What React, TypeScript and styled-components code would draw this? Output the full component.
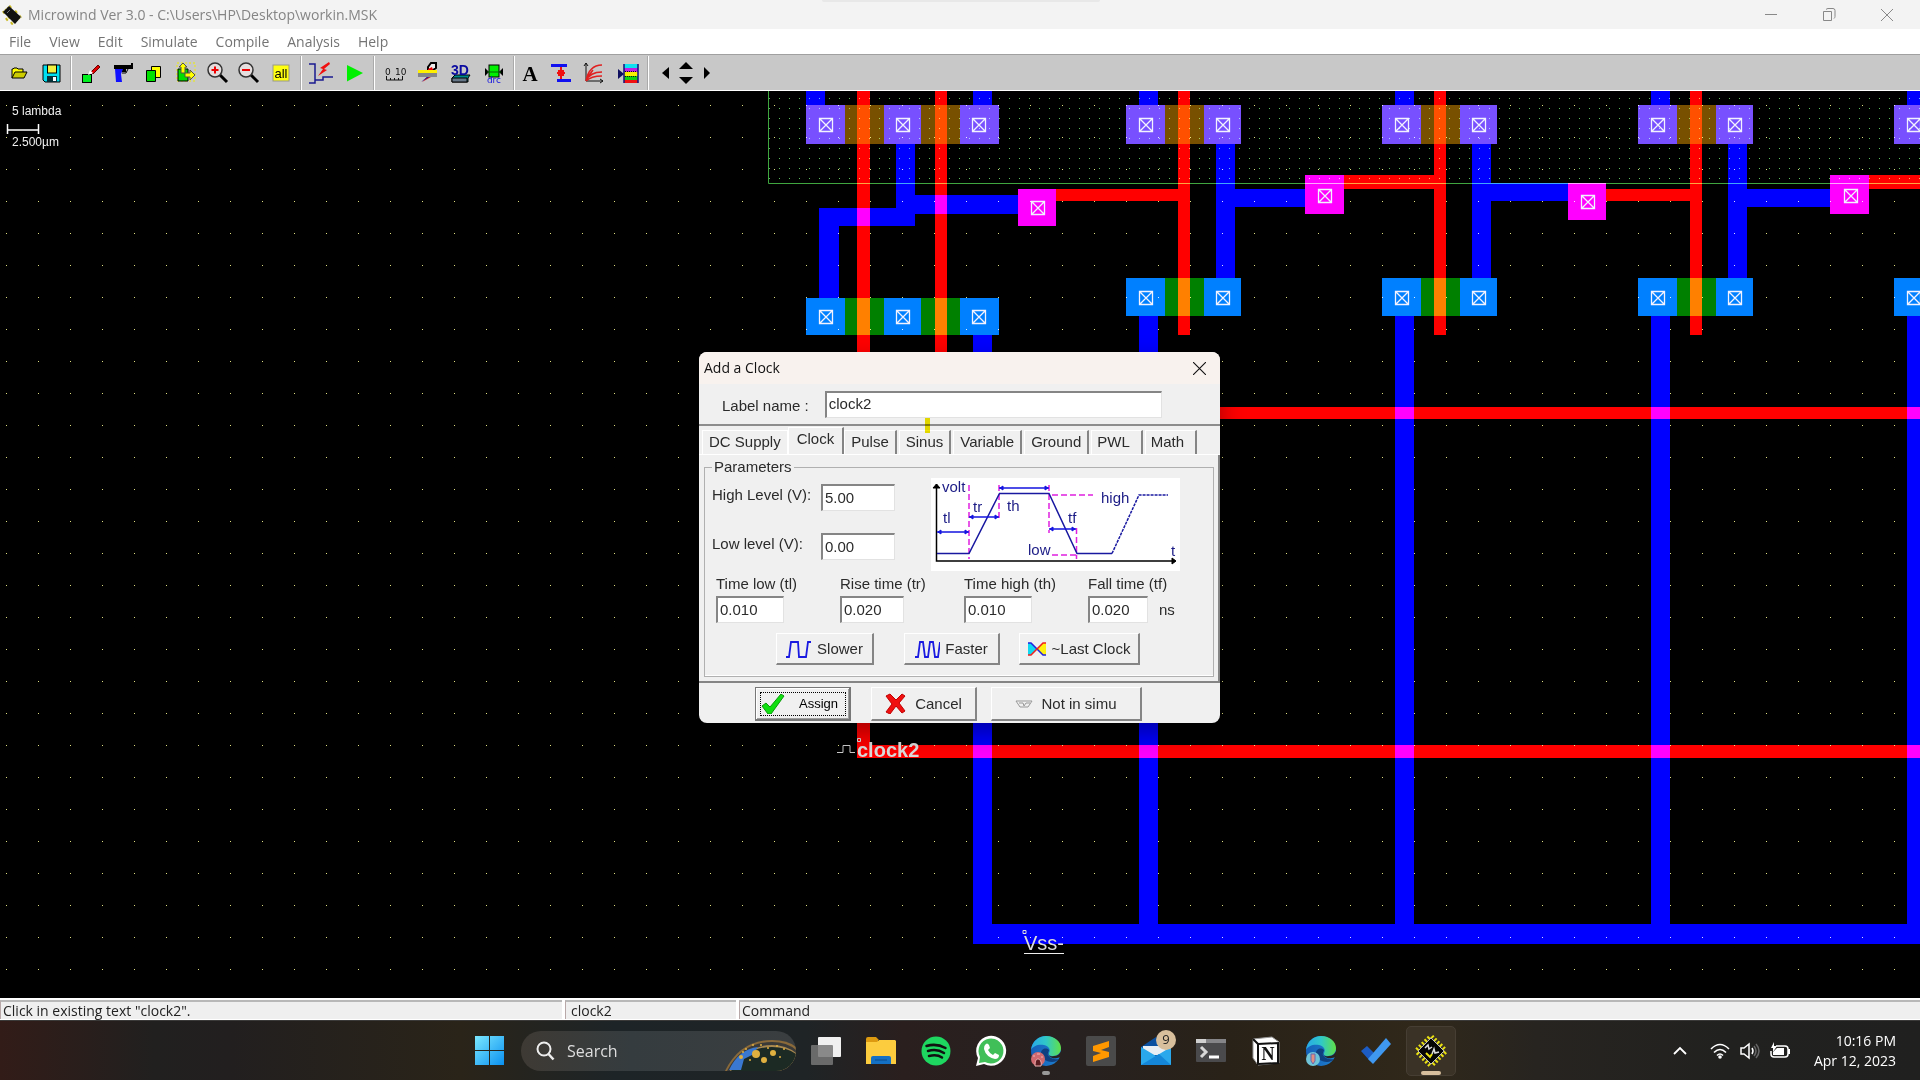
import React from "react";
import styled, { createGlobalStyle, css } from "styled-components";

const GlobalStyle = createGlobalStyle`
  * { box-sizing: border-box; }
  html, body { margin: 0; padding: 0; background: #000; }
  button, input { font: inherit; color: inherit; margin: 0; }
`;

const uiFont = `"Open Sans", "Noto Sans", sans-serif`;
const classicFont = `"Liberation Sans", Arial, sans-serif`;

const Screen = styled.div`
  display: flex;
  flex-direction: column;
  min-height: 100vh;
  overflow: hidden;
  font-family: ${uiFont};
  font-size: 14px;
`;

/* ---------- window chrome ---------- */

const TitleBar = styled.header`
  position: relative;
  display: flex;
  align-items: center;
  gap: 6px;
  height: 29px;
  padding-left: 2px;
  background: #f3f3f3;
  color: #858585;
`;

const SnapHandle = styled.div`
  position: absolute;
  top: 0;
  left: 50%;
  width: 278px;
  height: 2px;
  margin-left: -138px;
  border-radius: 0 0 4px 4px;
  background: #e8e8e8;
`;

const WindowTitle = styled.h1`
  flex: 1;
  margin: 0;
  font-size: 14px;
  font-weight: 400;
  line-height: 20px;
  white-space: nowrap;
`;

const WindowControls = styled.div`
  display: flex;
  gap: 12px;
  padding-right: 10px;
`;

const WindowButton = styled.button`
  display: grid;
  place-items: center;
  width: 46px;
  height: 28px;
  padding: 0;
  border: 0;
  background: none;
`;

const MenuBar = styled.nav`
  display: flex;
  align-items: center;
  gap: 18px;
  height: 25px;
  padding-left: 9px;
  background: #fff;
`;

const MenuItem = styled.button`
  padding: 0;
  border: 0;
  background: none;
  color: #747474;
  font-size: 14px;
  line-height: 20px;
`;

const ToolBar = styled.div`
  display: flex;
  align-items: center;
  gap: 7px;
  height: 37px;
  padding-left: 7px;
  background: #c8c8c8;
  border-top: 1px solid #a0a0a0;
  border-bottom: 1px solid #fff;
`;

const ToolGroup = styled.div<{ $width: number }>`
  display: flex;
  align-items: center;
  justify-content: space-between;
  width: ${(p) => p.$width}px;
`;

const ToolSeparator = styled.div`
  width: 2px;
  height: 34px;
  background: #fff;
  border-left: 1px solid #aaa;
`;

const ToolButton = styled.button<{ $width?: number; $height?: number }>`
  display: block;
  width: ${(p) => p.$width ?? 24}px;
  height: ${(p) => p.$height ?? 24}px;
  padding: 0;
  border: 0;
  background: none;
  svg { display: block; overflow: visible; }
`;

const ArrowStack = styled.div`
  display: flex;
  flex-direction: column;
  gap: 8px;
`;

/* ---------- layout canvas ---------- */

const Canvas = styled.main`
  position: relative;
  flex: 1;
  min-height: 700px;
  background: #000;
  overflow: hidden;
`;

const Drawing = styled.svg`
  position: absolute;
  inset: 0;
  width: 100%;
  height: 100%;
  isolation: isolate;
  font-family: ${classicFont};
`;

const Layer = styled.g`
  mix-blend-mode: screen;
`;

/* ---------- dialog ---------- */

const Dialog = styled.section`
  position: absolute;
  left: 699px;
  top: 261px;
  width: 521px;
  border-radius: 8px;
  overflow: hidden;
  background: #f0f0f0;
  color: #2b2b2b;
  font-family: ${classicFont};
  font-size: 15px;
  line-height: 18px;
  box-shadow: 0 10px 24px rgba(0, 0, 0, 0.35);
`;

const DialogTitle = styled.header`
  display: flex;
  align-items: center;
  justify-content: space-between;
  height: 32px;
  padding: 0 12px 0 5px;
  background: #f8f2ee;
  color: #111;
  font-family: ${uiFont};
  h2 { margin: 0; font-size: 14px; font-weight: 400; }
`;

const CloseButton = styled.button`
  padding: 2px;
  border: 0;
  background: none;
  svg { display: block; }
`;

const NameRow = styled.div`
  display: flex;
  align-items: center;
  gap: 16px;
  height: 42px;
  padding-left: 23px;
  border-bottom: 2px solid #8d8d8d;
  label { padding-top: 3px; }
`;

const sunken = css`
  border: 1px solid #e2e2e2;
  border-top: 2px solid #858585;
  border-left: 2px solid #858585;
  background: #fff;
`;

const TextBox = styled.input<{ $width: number }>`
  ${sunken}
  width: ${(p) => p.$width}px;
  height: 27px;
  padding: 0 0 2px 2px;
  line-height: 18px;
  outline: none;
`;

const TabStrip = styled.div`
  display: flex;
  align-items: flex-end;
  height: 29px;
  padding-left: 3px;
  border-bottom: 1px solid #fff;
`;

const Tab = styled.button<{ $active?: boolean; $first?: boolean; $wide?: boolean }>`
  height: ${(p) => (p.$active ? 27 : 24)}px;
  margin-right: ${(p) => (p.$active || p.$first ? 0 : 2)}px;
  padding: 0 6px 1px 6px;
  ${(p) => p.$active && css`padding: 0 8px 4px;`}
  ${(p) => p.$wide && css`padding-left: 5px; padding-right: 11px;`}
  border: 0;
  border-top: 1px solid #fff;
  border-left: 1px solid #fff;
  border-right: ${(p) => (p.$first ? "1px solid #fff" : "2px solid #858585")};
  background: #f0f0f0;
`;

const TabPanel = styled.div`
  padding: 3px 4px 4px 5px;
  border-right: 2px solid #858585;
  border-bottom: 2px solid #858585;
`;

const Parameters = styled.fieldset`
  margin: 0;
  padding: 0 0 11px 0;
  border: 1px solid #b0b0b0;
  box-shadow: inset 0 -1px 0 #fff;
  legend { margin-left: 7px; padding: 0 2px; }
`;

const LevelArea = styled.div`
  display: flex;
  justify-content: space-between;
  padding: 0 33px 0 7px;
`;

const Levels = styled.div`
  display: grid;
  grid-template-columns: 109px 74px;
  align-content: start;
  row-gap: 22px;
  padding-top: 8px;
  label { padding-top: 2px; }
`;

const Diagram = styled.svg`
  display: block;
  margin-top: 2px;
  background: #fff;
  font-family: ${classicFont};
  font-size: 15px;
`;

const Times = styled.div`
  display: grid;
  grid-template-columns: repeat(4, 124px);
  padding: 4px 0 0 11px;
`;

const TimeField = styled.div`
  display: flex;
  flex-direction: column;
  gap: 3px;
  white-space: nowrap;
`;

const WithUnit = styled.div`
  display: flex;
  align-items: center;
  gap: 11px;
`;

const ButtonRow = styled.div<{ $indent: number; $top: number; $bottom: number }>`
  display: flex;
  padding: ${(p) => p.$top}px 0 ${(p) => p.$bottom}px ${(p) => p.$indent}px;
`;

const PushButton = styled.button<{ $width: number; $before?: number; $tall?: boolean; $default?: boolean; $gap?: number }>`
  display: flex;
  align-items: center;
  justify-content: center;
  gap: ${(p) => p.$gap ?? 6}px;
  width: ${(p) => p.$width}px;
  height: ${(p) => (p.$tall ? 34 : 32)}px;
  margin-left: ${(p) => p.$before ?? 0}px;
  padding: 0;
  border: 1px solid #fff;
  border-right: 2px solid #858585;
  border-bottom: 2px solid #858585;
  background: #f0f0f0;
  white-space: nowrap;
  ${(p) =>
    p.$default &&
    css`
      padding-right: 6px;
      border: 2px solid #777;
      border-top-width: 1px;
      border-left-width: 1px;
      box-shadow: inset 1px 1px 0 #fff, inset -1px -1px 0 #a0a0a0;
      outline: 1px dotted #000;
      outline-offset: -6px;
      color: #000;
      font-size: 13px;
    `}
`;

/* ---------- status bar ---------- */

const StatusBar = styled.footer`
  display: flex;
  gap: 3px;
  height: 22px;
  padding: 2px 0 1px;
  background: #fff;
  color: #222;
`;

const StatusPane = styled.div<{ $width?: number; $indent?: number }>`
  ${(p) => (p.$width ? `width: ${p.$width}px;` : "flex: 1;")}
  padding-left: ${(p) => p.$indent ?? 2}px;
  background: #efefef;
  border-top: 2px solid #b8b8b8;
  border-left: 1px solid #b8a8a8;
  line-height: 18px;
  white-space: nowrap;
`;

/* ---------- taskbar ---------- */

const TaskBar = styled.nav`
  display: grid;
  grid-template-columns: 1fr auto 1fr;
  align-items: center;
  height: 60px;
  border-top: 1px solid #3b3a39;
  color: #fff;
  background: linear-gradient(90deg, #321c18 0, #21201f 8%, #221f1f 12%, #2a2419 24%, #1d2427 32%, #1f2426 42%, #2a1f1e 47%, #272120 56%, #292218 64%, #30281a 74%, #272420 80%, #21211f 90%, #20201f 100%);
`;

const TaskItems = styled.div`
  grid-column: 2;
  display: flex;
  align-items: center;
  gap: 5px;
`;

const TaskButton = styled.button<{ $active?: boolean }>`
  position: relative;
  display: grid;
  place-items: center;
  width: 50px;
  height: 50px;
  padding: 0;
  border: 1px solid ${(p) => (p.$active ? "#463e33" : "transparent")};
  border-radius: 5px;
  background: ${(p) => (p.$active ? "#3a3226" : "none")};
  svg { display: block; overflow: visible; }
`;

const Running = styled.span<{ $width: number; $color: string }>`
  position: absolute;
  bottom: 0;
  left: 50%;
  width: ${(p) => p.$width}px;
  height: 4px;
  margin-left: ${(p) => -p.$width / 2}px;
  border-radius: 2px;
  background: ${(p) => p.$color};
`;

const Badge = styled.span`
  position: absolute;
  top: 3px;
  right: 4px;
  width: 20px;
  height: 20px;
  border-radius: 10px;
  background: #d8bf9c;
  color: #222;
  font-size: 13px;
  line-height: 19px;
  text-align: center;
`;

const Search = styled.label`
  display: flex;
  align-items: center;
  gap: 12px;
  width: 275px;
  height: 40px;
  margin-left: 2px;
  padding-left: 14px;
  border-radius: 20px;
  overflow: hidden;
  background: linear-gradient(90deg, #3e3a34, #353c3f 40%, #3a3e40);
  input {
    flex: 1;
    min-width: 0;
    padding: 0;
    border: 0;
    outline: 0;
    background: none;
    color: #dedede;
    font-size: 16px;
  }
  input::placeholder { color: #dedede; opacity: 1; }
  svg { flex: none; display: block; }
`;

const Tray = styled.div`
  display: flex;
  align-items: center;
  justify-content: flex-end;
  padding-right: 24px;
`;

const TrayIcons = styled.div`
  display: flex;
  margin-left: 10px;
`;

const TrayButton = styled.button`
  display: grid;
  place-items: center;
  width: 30px;
  height: 40px;
  padding: 0;
  border: 0;
  background: none;
  svg { display: block; }
`;

const Clock = styled.time`
  width: 101px;
  text-align: right;
  line-height: 20px;
  white-space: nowrap;
`;

/* ---------- toolbar icons, each on a 24 x 24 grid ---------- */

const glyphs: Record<string, React.ReactNode> = {
  open: (
    <>
      <path d="M5 17V8h1l1-1h3l1 1h5v3" fill="#ff0" stroke="#000" />
      <path d="M5 17l3-6h12l-3 6z" fill="#cc0" stroke="#000" />
    </>
  ),
  save: (
    <>
      <path d="M4 4h17v17H6l-2-2z" fill="#00e0f0" stroke="#000" />
      <rect x="8.5" y="4" width="9" height="8" fill="#f0f040" stroke="#000" />
      <rect x="8" y="15" width="10" height="6" fill="#053038" />
      <rect x="14" y="16" width="3" height="4" fill="#fff" />
    </>
  ),
  paint: (
    <>
      <rect x="3.5" y="13.5" width="9" height="8" fill="#00f020" stroke="#000" />
      <path d="M12 11l7-7 2 2-7 7z" fill="#e00000" stroke="#600" />
      <path d="M9 14l2-5 3 3z" fill="#fff" />
    </>
  ),
  gun: (
    <>
      <path d="M3 4h17V2h2v6h-7v3h-4V8H3z" fill="#000" />
      <path d="M4 8h8l-2 5 1 8H5z" fill="#1010ff" />
      <path d="M11 12h4l2-4" fill="none" stroke="#000" />
    </>
  ),
  copy: (
    <>
      <path d="M9.5 5.5h9v11h-9z" fill="#ff0" stroke="#000" />
      <path d="M4.5 9.5h9v11h-9z" fill="#00e000" stroke="#000" />
    </>
  ),
  move: (
    <>
      <path d="M3 2h18v18H3z" fill="none" stroke="#ee0" strokeDasharray="2 2" />
      <path d="M4 8h10v12H4z" fill="#00e000" stroke="#000" />
      <path d="M7 12V6H5l4-4 4 4h-2v6zM11 12h5V9l5 5-5 5v-3h-5z" fill="#ff0" stroke="#554" />
    </>
  ),
  zoomIn: (
    <>
      <path d="M14 14l7 7" stroke="#000" strokeWidth="3" />
      <circle cx="9" cy="9" r="7" fill="#e4dede" stroke="#333" strokeWidth="1.5" />
      <path d="M9 5.5v7M5.5 9h7" stroke="#e00" strokeWidth="2" />
    </>
  ),
  zoomOut: (
    <>
      <path d="M14 14l7 7" stroke="#000" strokeWidth="3" />
      <circle cx="9" cy="9" r="7" fill="#e4dede" stroke="#333" strokeWidth="1.5" />
      <path d="M5 9h8" stroke="#e00" strokeWidth="2" />
    </>
  ),
  all: (
    <>
      <rect x="4" y="4" width="16" height="16" fill="#ffff10" stroke="#998" />
      <text x="12" y="17" textAnchor="middle" fontFamily="Liberation Sans Narrow, Liberation Sans" fontSize="13" fill="#000">all</text>
    </>
  ),
  wire: (
    <>
      <path d="M0 3h6v19H0M6 19h8v-3h10" fill="none" stroke="#1a1a90" strokeWidth="1.5" />
      <path d="M20 1l-9 6 3 1-5 7 9-6-3-1 6-5z" fill="#f01010" />
    </>
  ),
  play: <path d="M5 4l16 8-16 8.5z" fill="#00f000" />,
  ruler: (
    <>
      <text x="3" y="14" fontFamily="DejaVu Sans" fontSize="9" fill="#111">0</text>
      <text x="13" y="14" fontFamily="DejaVu Sans" fontSize="9" fill="#111">10</text>
      <path d="M4.500 15v4h16v-4M8.500 17v2M12.500 17v2M16.500 17v2" fill="none" stroke="#111" />
    </>
  ),
  section: (
    <>
      <path d="M13 9V6l3-4h5v5l-3 2z" fill="#eee" stroke="#000" strokeWidth="2" />
      <path d="M13 8l4-2 1 3h-5z" fill="#e00" />
      <path d="M3 9h19v3H3z" fill="#fff000" />
      <path d="M3 12h19v4H3z" fill="#85858a" />
      <path d="M7 21l5-5h4z" fill="#d02020" />
      <path d="M6 21l6-5h2z" fill="#1515a0" />
    </>
  ),
  three: (
    <>
      <path d="M3 17l3-3h15l-2 3v4H3z" fill="#088" stroke="#000" />
      <path d="M3 17h15v4H3z" fill="#678" stroke="#000" />
      <text x="11" y="14" textAnchor="middle" fontFamily="Liberation Sans Narrow, Liberation Sans" fontWeight="700" fontSize="14" fill="#0a0aa0">3D</text>
    </>
  ),
  drc: (
    <>
      <path d="M3 7v8l4-4zM21 7v8l-4-4z" fill="#000" />
      <rect x="7" y="4" width="10" height="12" fill="#00f000" stroke="#000" />
      <path d="M5 11h14" stroke="#060" />
      <text x="12" y="22" textAnchor="middle" fontFamily="DejaVu Sans" fontSize="9" fill="#1010e0">drc</text>
    </>
  ),
  text: <text x="8" y="20" textAnchor="middle" fontFamily="Liberation Serif" fontWeight="700" fontSize="21" fill="#000">A</text>,
  pinch: (
    <>
      <path d="M3 3h16v3H3zM9 18h14v3H9z" fill="#1010f0" />
      <path d="M13 6v12M9 12h8" stroke="#f01010" strokeWidth="2" />
      <path d="M10 9h6v6h-6z" fill="#f01010" />
    </>
  ),
  graph: (
    <>
      <path d="M4 2v18h17M2 5l2-3 2 3M18 18l3 2-3 2" fill="none" stroke="#111" />
      <path d="M4 20Q7 4 20 4M4 20q4-9 16-9M4 20q5-5 16-5M5 17l6-8" fill="none" stroke="#e02020" strokeWidth="1.5" />
    </>
  ),
  layers: (
    <>
      <path d="M8 3h14v4H8z" fill="#10e0f0" />
      <path d="M8 7h14v4H8z" fill="#c020e0" />
      <path d="M8 11h14v4H8z" fill="#f8f000" />
      <path d="M8 15h14v4H8z" fill="#10d010" />
      <path d="M8 19h14v3H8z" fill="#f01010" />
      <path d="M9 10.500h12M9 15.500h12" stroke="#111" strokeDasharray="1 1" />
      <path d="M8 3v19M22 3v19" stroke="#101080" strokeWidth="1.5" />
      <path d="M2 8v10l6-5z" fill="#101060" />
    </>
  ),
};

const toolGroups: { width: number; tools: [string, string][] }[] = [
  { width: 56, tools: [["open", "Open"], ["save", "Save"]] },
  {
    width: 214,
    tools: [["paint", "Draw box"], ["gun", "Delete"], ["copy", "Copy"], ["move", "Stretch"], ["zoomIn", "Zoom in"], ["zoomOut", "Zoom out"], ["all", "View all"]],
  },
  { width: 57, tools: [["wire", "View node"], ["play", "Run simulation"]] },
  { width: 124, tools: [["ruler", "Measure"], ["section", "2D section"], ["three", "3D view"], ["drc", "Design rules"]] },
  { width: 118, tools: [["text", "Add text"], ["pinch", "Connect layers"], ["graph", "MOS characteristics"], ["layers", "Palette"]] },
];

const Tools = () => (
  <ToolBar role="toolbar">
    {toolGroups.map((group) => (
      <React.Fragment key={group.width}>
        <ToolGroup $width={group.width}>
          {group.tools.map(([glyph, label]) => (
            <ToolButton key={glyph} aria-label={label} $width={glyph === "text" ? 16 : 24}>
              <svg width={glyph === "text" ? 16 : 24} height="24">{glyphs[glyph]}</svg>
            </ToolButton>
          ))}
        </ToolGroup>
        <ToolSeparator />
      </React.Fragment>
    ))}
    <ToolGroup $width={60}>
      <ToolButton aria-label="Scroll left" $width={16} $height={14}>
        <svg width="16" height="14"><path d="M13 1v12L6 7z" /></svg>
      </ToolButton>
      <ArrowStack>
        <ToolButton aria-label="Scroll up" $width={16} $height={8}>
          <svg width="16" height="8"><path d="M1 8h14L8 1z" /></svg>
        </ToolButton>
        <ToolButton aria-label="Scroll down" $width={16} $height={8}>
          <svg width="16" height="8"><path d="M1 0h14L8 7z" /></svg>
        </ToolButton>
      </ArrowStack>
      <ToolButton aria-label="Scroll right" $width={16} $height={14}>
        <svg width="16" height="14"><path d="M4 1v12l6-6z" /></svg>
      </ToolButton>
    </ToolGroup>
  </ToolBar>
);

/* ---------- chip layout ---------- */

type Box = [number, number, number, number]; // left, top, right, bottom

const boxes = (list: Box[]) =>
  list.map(([l, t, r, b]) => <rect key={`${l}-${t}-${r}`} x={l} y={t} width={r - l} height={b - t} />);

const cells = [1126, 1382, 1638, 1894];

const pDiffusion: Box[] = [[806, 105, 999, 144], ...cells.map((x): Box => [x, 105, x + 115, 144])];
const nDiffusion: Box[] = [[806, 298, 999, 335], ...cells.map((x): Box => [x, 278, x + 115, 316])];

const metal: Box[] = [
  [806, 105, 845, 144], [884, 105, 921, 144], [960, 105, 999, 144],
  [806, 298, 845, 335], [884, 298, 921, 335], [960, 298, 999, 335],
  [806, 91, 825, 105], [973, 91, 992, 105],
  [896, 144, 915, 226], [915, 195, 1018, 214], [819, 208, 896, 226], [819, 226, 839, 298],
  [973, 335, 992, 944], [992, 924, 1920, 944],
  [1018, 189, 1056, 226], [1305, 175, 1344, 214], [1568, 183, 1606, 220], [1830, 175, 1869, 214],
  [1235, 189, 1305, 207], [1491, 183, 1568, 201], [1747, 189, 1830, 207],
  ...cells.flatMap((x): Box[] => [
    [x, 105, x + 39, 144], [x + 78, 105, x + 115, 144],
    [x, 278, x + 39, 316], [x + 78, 278, x + 115, 316],
    [x + 13, 91, x + 32, 105], [x + 90, 144, x + 109, 278], [x + 13, 316, x + 32, 924],
  ]),
];

const poly: Box[] = [
  [857, 91, 870, 758], [935, 91, 947, 407], [870, 745, 1920, 758], [935, 407, 1920, 419],
  [1178, 91, 1190, 335], [1434, 91, 1446, 335], [1690, 91, 1702, 335],
  [1018, 189, 1056, 226], [1305, 175, 1344, 214], [1568, 183, 1606, 220], [1830, 175, 1869, 214],
  [1056, 189, 1178, 201], [1344, 175, 1434, 189], [1606, 189, 1690, 201], [1869, 175, 1920, 189],
];

const contacts: [number, number][] = [
  [826, 125], [903, 125], [979, 125], [826, 317], [903, 317], [979, 317],
  ...cells.flatMap((x): [number, number][] => [[x + 20, 125], [x + 97, 125], [x + 20, 298], [x + 97, 298]]),
  [1038, 208], [1325, 196], [1588, 202], [1851, 196],
];

const ChipLayout = () => (
  <Drawing aria-label="Layout">
    <defs>
      <pattern id="grid" x="6" y="9" width="32" height="32" patternUnits="userSpaceOnUse">
        <rect x="0" y="0" width="1" height="1" fill="#dede80" />
      </pattern>
      <pattern id="well" x="769" y="98" width="10" height="10" patternUnits="userSpaceOnUse">
        <rect width="1" height="1" fill="#5cbc5c" />
      </pattern>
    </defs>
    <g transform="translate(0 -91)">
      <Layer fill="#785000">{boxes(pDiffusion)}</Layer>
      <Layer fill="#008000">{boxes(nDiffusion)}</Layer>
      <Layer fill="#00f">{boxes(metal)}</Layer>
      <Layer fill="#f00">{boxes(poly)}</Layer>
      <g fill="none" stroke="#f2f2ff">
        {contacts.map(([x, y]) => (
          <path key={`${x}-${y}`} d={`M${x - 6.5} ${y - 6.5}h13v13h-13zl13 13m0-13l-13 13`} strokeWidth="1.3" />
        ))}
      </g>
      <Layer>
        <rect x="0" y="92" width="1920" height="900" fill="url(#grid)" />
        <rect x="768" y="92" width="1152" height="91" fill="url(#well)" />
        <path d="M768.5 91v92.5H1920" fill="none" stroke="#3fa63f" />
      </Layer>
      <path d="M7.5 124v10M38.5 124v10M7 130h32" fill="none" stroke="#fff" strokeWidth="1.5" />
      <g fill="#f0f0f0" fontSize="12">
        <text x="12" y="115">5 lambda</text>
        <text x="12" y="146">2.500µm</text>
      </g>
      <g fill="#dcdcdc" fontSize="20">
        <text x="857" y="757" fontWeight="700">clock2</text>
        <text x="1024" y="950">Vss-</text>
      </g>
      <path d="M1024 953.5h40" stroke="#eee" />
      <path d="M1023 930.5h3v3h-3zM857.5 738.5h3v3h-3z" fill="none" stroke="#ddd" />
      <path d="M837 752.5h6v-7h7v7h5" fill="none" stroke="#ccc" />
    </g>
  </Drawing>
);

/* ---------- dialog parts ---------- */

const CloseGlyph = ({ size, color }: { size: number; color: string }) => (
  <svg width={size} height={size} viewBox="0 0 12 12"><path d="M0 0l12 12M12 0L0 12" stroke={color} /></svg>
);

const TimingDiagram = () => (
  <Diagram width="249" height="93" role="img" aria-label="Clock timing">
    <g fill="none" stroke="#000">
      <path d="M5.5 6v77h238" strokeWidth="1.5" />
      <path d="M2 10l3.5-4 3.5 4zM241 80l4 3-4 3z" fill="#000" />
    </g>
    <g fill="none" stroke="#e020e0" strokeWidth="1.5" strokeDasharray="6 3">
      <path d="M38 7v74M68 7v35M118 7v48M145.5 50v31M121 17h41M121 77h25" />
    </g>
    <g fill="none" stroke="#1818a0" strokeWidth="1.5">
      <path d="M6 75.5h32L68.5 15.5H118L146 75.5h35" />
      <path d="M181 75.5l27-58.5h29" strokeDasharray="3 1" />
    </g>
    <g stroke="#1515e0" strokeWidth="1.5" fill="#1515e0">
      <path d="M6 54h32M38 39h30M68 10h50M118 51h27" />
      <path d="M10 52l-3 2 3 2zM34 52l3 2-3 2zM42 37l-3 2 3 2zM64 37l3 2-3 2zM72 8l-3 2 3 2zM114 8l3 2-3 2zM122 49l-3 2 3 2zM141 49l3 2-3 2z" strokeWidth="1" />
    </g>
    <g fill="#1c1c86">
      <text x="11" y="14">volt</text>
      <text x="12" y="45">tl</text>
      <text x="42" y="34">tr</text>
      <text x="76" y="33">th</text>
      <text x="137" y="45">tf</text>
      <text x="170" y="25">high</text>
      <text x="97" y="77">low</text>
      <text x="240" y="78">t</text>
    </g>
  </Diagram>
);

const times = [
  { id: "tl", label: "Time low (tl)", value: "0.010", width: 68 },
  { id: "tr", label: "Rise time (tr)", value: "0.020", width: 64 },
  { id: "th", label: "Time high (th)", value: "0.010", width: 68 },
  { id: "tf", label: "Fall time (tf)", value: "0.020", width: 60, unit: "ns" },
];

const ClockDialog = () => (
  <Dialog role="dialog" aria-label="Add a Clock">
    <DialogTitle>
      <h2>Add a Clock</h2>
      <CloseButton aria-label="Close"><CloseGlyph size={13} color="#111" /></CloseButton>
    </DialogTitle>
    <NameRow>
      <label htmlFor="label-name">Label name :</label>
      <TextBox id="label-name" $width={337} defaultValue="clock2" />
    </NameRow>
    <TabStrip role="tablist">
      <Tab role="tab" $first>DC Supply</Tab>
      <Tab role="tab" $active aria-selected>Clock</Tab>
      <Tab role="tab">Pulse</Tab>
      <Tab role="tab">Sinus</Tab>
      <Tab role="tab">Variable</Tab>
      <Tab role="tab">Ground</Tab>
      <Tab role="tab" $wide>PWL</Tab>
      <Tab role="tab" $wide>Math</Tab>
    </TabStrip>
    <TabPanel>
      <Parameters>
        <legend>Parameters</legend>
        <LevelArea>
          <Levels>
            <label htmlFor="high">High Level (V):</label>
            <TextBox id="high" $width={74} defaultValue="5.00" />
            <label htmlFor="low">Low level (V):</label>
            <TextBox id="low" $width={74} defaultValue="0.00" />
          </Levels>
          <TimingDiagram />
        </LevelArea>
        <Times>
          {times.map((t) => (
            <TimeField key={t.id}>
              <label htmlFor={t.id}>{t.label}</label>
              <WithUnit>
                <TextBox id={t.id} $width={t.width} defaultValue={t.value} />
                {t.unit}
              </WithUnit>
            </TimeField>
          ))}
        </Times>
        <ButtonRow $indent={71} $top={10} $bottom={0}>
          <PushButton $width={98}>
            <svg width="25" height="18"><path d="M0 17h3l2-15h7l1 15h7l2-15h3" fill="none" stroke="#1a1ae0" strokeWidth="1.8" /></svg>
            Slower
          </PushButton>
          <PushButton $width={96} $before={30} $gap={5}>
            <svg width="25" height="18"><path d="M0 17h3l2-15h3l2 15h3l2-15h3l2 15h3l2-15" fill="none" stroke="#1a1ae0" strokeWidth="1.8" /></svg>
            Faster
          </PushButton>
          <PushButton $width={121} $before={19}>
            <svg width="18" height="14">
              <path d="M0 1l3 0 6 6-6 6H0z" fill="#10d8f0" />
              <path d="M18 1h-3L9 7l6 6h3z" fill="#fff010" />
              <path d="M0 1h3l12 12h3" fill="none" stroke="#2020e0" strokeWidth="1.5" />
              <path d="M0 13h3L15 1h3" fill="none" stroke="#f02020" strokeWidth="1.5" />
            </svg>
            ~Last Clock
          </PushButton>
        </ButtonRow>
      </Parameters>
    </TabPanel>
    <ButtonRow $indent={56} $top={4} $bottom={2}>
      <PushButton $width={96} $tall $default $gap={14}>
        <svg width="24" height="20"><path d="M1 12l4-3 4 4L20 0l3 2L10 20H7z" fill="#10e010" stroke="#0a9a0a" /></svg>
        Assign
      </PushButton>
      <PushButton $width={106} $before={20} $tall $gap={9}>
        <svg width="21" height="21"><path d="M1 3l4-2 6 6 6-6 3 2-6 7 6 8-3 2-6-7-6 8-4-2 6-8z" fill="#f01010" stroke="#c00000" /></svg>
        Cancel
      </PushButton>
      <PushButton $width={151} $before={14} $tall $gap={8}>
        <svg width="18" height="8"><path d="M1 1h16l-4 6H5zM4 3h4l1 3 2-3h4" fill="none" stroke="#999" /></svg>
        Not in simu
      </PushButton>
    </ButtonRow>
  </Dialog>
);

const CaretMark = styled.div`
  position: absolute;
  left: 925px;
  top: 327px;
  width: 5px;
  height: 15px;
  background: #f0e400;
  mix-blend-mode: multiply;
`;

/* ---------- taskbar icons ---------- */

const Edge = ({ dot }: { dot: string }) => (
  <svg width="30" height="30" viewBox="0 0 30 30">
    <defs>
      <linearGradient id="edgeTop" x1="0" x2="1"><stop offset="0" stopColor="#28a8e8" /><stop offset=".5" stopColor="#30c8c8" /><stop offset="1" stopColor="#60e048" /></linearGradient>
      <linearGradient id="edgeLow" x1="0" x2="1"><stop offset="0" stopColor="#1560b8" /><stop offset="1" stopColor="#1e80d0" /></linearGradient>
    </defs>
    <circle cx="15" cy="15" r="15" fill="url(#edgeLow)" />
    <path d="M0 14C1 5 8 0 15 0c9 0 15 6 15 12 0 5-4 8-8 8-3 0-5-1-4-3 2-3 0-7-5-8C7 8 2 10 0 14z" fill="url(#edgeTop)" />
    <path d="M10 17c0 5 5 9 11 9 3 0 5-1 7-3-3 1-9 0-11-4-1-2 1-3 1-5-3-3-8-1-8 3z" fill="#0f4080" />
    <path d="M17 16c-1 3 2 5 6 4 3 0 6-2 7-5v6l-4 1c-5 1-9-1-9-6z" fill="#29221f" />
    <circle cx="7" cy="23" r="7" fill={dot} />
    {dot === "#d06a70" ? (
      <path d="M4 30c0-5 1-7 3-7s4 3 3 7zM2 20h2M6 18h3M10 21h2" fill="#5a1c20" stroke="#f4b4b4" />
    ) : (
      <path d="M5 18h4v7l-2 3-2-3z" fill="#e09080" stroke="#6668b0" />
    )}
  </svg>
);

const goldDots: [number, number, number][] = [
  [34, 23, 4], [51, 22, 3], [42, 29, 3], [19, 26, 2], [24, 18, 1], [39, 14, 1], [55, 15, 1], [62, 18, 1], [28, 29, 1], [46, 17, 1], [58, 26, 1], [31, 14, 1], [21, 21, 1],
];

const taskApps: { name: string; icon: React.ReactNode; running?: boolean; badge?: string; active?: boolean }[] = [
  {
    name: "Task view",
    icon: (
      <svg width="30" height="28">
        <rect x="7" y="0" width="23" height="20" rx="1" fill="#f0f0f0" />
        <rect x="0" y="8" width="22" height="20" rx="1" fill="#777" opacity=".85" />
      </svg>
    ),
  },
  {
    name: "File Explorer",
    icon: (
      <svg width="30" height="27">
        <path d="M0 2q0-2 2-2h8l3 3h-1v4H0z" fill="#dd9a10" />
        <path d="M0 5h11l2-2h16l1 1v23H0z" fill="#fccc3e" />
        <path d="M5 27v-6q0-2 2-2h16q2 0 2 2v6z" fill="#1470c4" />
        <path d="M9 23h12" stroke="#0a4a8a" />
      </svg>
    ),
  },
  {
    name: "Spotify",
    icon: (
      <svg width="30" height="30">
        <circle cx="15" cy="15" r="14.5" fill="#1ed760" />
        <path d="M5.5 10q10-3 19 2M7 15q9-2.5 16 2M8 20q8-2 13 1.5" fill="none" stroke="#111" strokeWidth="2.5" strokeLinecap="round" />
      </svg>
    ),
  },
  {
    name: "WhatsApp",
    icon: (
      <svg width="30" height="30" viewBox="0 0 30 30">
        <path d="M0 30l2-8A15 15 0 1 1 8 28z" fill="#fff" />
        <path d="M3 27l1-6A12.5 12.5 0 1 1 9 26z" fill="#40bf58" />
        <path d="M9 9q2-3 4 0l1 3-2 2q2 4 5 5l2-2 4 2q0 4-4 4Q10 21 8 13q0-3 1-4z" fill="#fff" />
      </svg>
    ),
  },
  { name: "Edge, personal", icon: <Edge dot="#d06a70" />, running: true },
  {
    name: "Sublime Text",
    icon: (
      <svg width="30" height="30">
        <rect width="30" height="30" rx="2" fill="#4a4a4a" />
        <path d="M7 10l16-5v6l-8 3 8 2v5L7 26v-6l8-3-8-2z" fill="#ff9800" />
      </svg>
    ),
  },
  {
    name: "Mail",
    badge: "9",
    icon: (
      <svg width="30" height="28">
        <path d="M0 10L15 0l15 10v10H0z" fill="#0a50a0" />
        <path d="M2 9h26v9H2z" fill="#e8eef4" />
        <path d="M0 10l15 9 15-9v18H0z" fill="#2aa8ec" />
        <path d="M0 28L18 17l12 11z" fill="#1486d8" />
      </svg>
    ),
  },
  {
    name: "Terminal",
    icon: (
      <svg width="30" height="23">
        <rect width="30" height="23" rx="1" fill="#4a4a4c" />
        <path d="M0 0h30v4H0z" fill="#858588" />
        <path d="M0 0h10v4H0z" fill="#d0d0d0" />
        <path d="M5 8l5 5-5 5" fill="none" stroke="#d8d8d8" strokeWidth="3" />
        <path d="M13 18h10" stroke="#fff" strokeWidth="3" />
      </svg>
    ),
  },
  {
    name: "Notion",
    icon: (
      <svg width="28" height="28">
        <path d="M1 2l19-2 7 5v21l-21 2-5-7z" fill="#fff" stroke="#999" />
        <path d="M6 7l20-1v20L6 27z" fill="#fff" stroke="#111" strokeWidth="2" />
        <path d="M1 2l5 5v20" fill="none" stroke="#111" strokeWidth="2" />
        <text x="16" y="23" textAnchor="middle" fontFamily="Liberation Serif" fontWeight="700" fontSize="18" fill="#111">N</text>
      </svg>
    ),
  },
  { name: "Edge, work", icon: <Edge dot="#70c4d8" /> },
  {
    name: "To Do",
    icon: (
      <svg width="30" height="26">
        <path d="M0 13l6-5 8 8-5 7z" fill="#1c5cc4" />
        <path d="M7 21L25 0l5 6-18 20z" fill="#3f98f0" />
      </svg>
    ),
  },
  {
    name: "Microwind",
    active: true,
    icon: (
      <svg width="30" height="30">
        <path d="M15 1l14 14-14 14L1 15z" fill="none" stroke="#e8e010" strokeWidth="6" strokeDasharray="2 2" />
        <path d="M15 2l13 13-13 13L2 15z" fill="#050505" stroke="#bbb" />
        <path d="M9 12l3-3 1 4 3-2M16 18l2-5 1 4 4-1" fill="none" stroke="#ddd" strokeWidth="1.5" />
        <path d="M10 17l4 4 2-3" fill="none" stroke="#e8e010" strokeWidth="2" />
      </svg>
    ),
  },
];

const Chip = () => (
  <svg width="20" height="20">
    <path d="M1 8L9 1M4 15l11-9M9 19l10-8" stroke="#c8b820" strokeWidth="3" strokeDasharray="2 1" />
    <path d="M1 7l6-6 12 11-6 7z" fill="#111" />
    <path d="M5 8l3-3" stroke="#777" />
  </svg>
);

export default function App() {
  return (
    <Screen>
      <GlobalStyle />
      <TitleBar>
        <SnapHandle />
        <Chip />
        <WindowTitle>Microwind Ver 3.0 - C:\Users\HP\Desktop\workin.MSK</WindowTitle>
        <WindowControls>
          <WindowButton aria-label="Minimize"><svg width="12" height="12"><path d="M0 5.5h12" stroke="#888" /></svg></WindowButton>
          <WindowButton aria-label="Restore">
            <svg width="13" height="13"><path d="M.5 3.5h8v9h-8zM3 1.500q1-1 2-1h5q2 0 2 2v6q0 1-1 2" fill="none" stroke="#888" /></svg>
          </WindowButton>
          <WindowButton aria-label="Close window"><CloseGlyph size={12} color="#888" /></WindowButton>
        </WindowControls>
      </TitleBar>
      <MenuBar>
        {["File", "View", "Edit", "Simulate", "Compile", "Analysis", "Help"].map((m) => (
          <MenuItem key={m}>{m}</MenuItem>
        ))}
      </MenuBar>
      <Tools />
      <Canvas>
        <ChipLayout />
        <ClockDialog />
        <CaretMark />
      </Canvas>
      <StatusBar>
        <StatusPane $width={562}>Click in existing text "clock2".</StatusPane>
        <StatusPane $width={171} $indent={5}>clock2</StatusPane>
        <StatusPane>Command</StatusPane>
      </StatusBar>
      <TaskBar>
        <TaskItems>
          <TaskButton aria-label="Start">
            <svg width="29" height="29">
              <defs>
                <linearGradient id="win" x1="0" y1="0" x2="1" y2="1"><stop offset="0" stopColor="#7be8ff" /><stop offset="1" stopColor="#0a90f0" /></linearGradient>
              </defs>
              <path d="M0 0h14v14H0zM15 0h14v14H15zM0 15h14v14H0zM15 15h14v14H15z" fill="url(#win)" />
            </svg>
          </TaskButton>
          <Search>
            <svg width="20" height="20"><circle cx="9" cy="8" r="6.5" fill="none" stroke="#eee" strokeWidth="2" /><path d="M13.5 13l5 5.5" stroke="#eee" strokeWidth="2.5" /></svg>
            <input placeholder="Search" aria-label="Search" />
            <svg width="74" height="40">
              <path d="M3 40Q18 9 50 9q16 0 24 7v24z" fill="#8a6a3a" />
              <path d="M5 40Q20 11 50 11q15 0 24 8v21z" fill="#3a3a38" />
              <path d="M8 40Q24 14 50 14q14 0 24 8v18z" fill="#a88850" />
              <path d="M9 40Q24 16 50 16q14 0 24 7v17z" fill="#1c2a24" />
              <path d="M7 39Q17 18 36 16l-6 8-8 4-3 11z" fill="#3a78d0" />
              <g fill="#e0b040">{goldDots.map(([x, y, r]) => <circle key={`${x}-${y}`} cx={x} cy={y} r={r} />)}</g>
            </svg>
          </Search>
          {taskApps.map((app) => (
            <TaskButton key={app.name} aria-label={app.name} $active={app.active}>
              {app.icon}
              {app.badge && <Badge>{app.badge}</Badge>}
              {app.running && <Running $width={8} $color="#999" />}
              {app.active && <Running $width={20} $color="#d8bf9c" />}
            </TaskButton>
          ))}
        </TaskItems>
        <Tray>
          <TrayButton aria-label="Hidden icons">
            <svg width="14" height="9"><path d="M1 8l6-6 6 6" fill="none" stroke="#fff" strokeWidth="1.8" /></svg>
          </TrayButton>
          <TrayIcons>
            <TrayButton aria-label="Network">
              <svg width="20" height="16">
                <path d="M1 6q9-9 18 0M4 9.500q6-6 12 0M7 12.500q3-3 6 0" fill="none" stroke="#fff" strokeWidth="1.6" />
                <circle cx="10" cy="14" r="1.8" fill="#fff" />
              </svg>
            </TrayButton>
            <TrayButton aria-label="Volume">
              <svg width="20" height="18">
                <path d="M1 6h3l5-4v14l-5-4H1z" fill="none" stroke="#fff" strokeWidth="1.5" />
                <path d="M12 6q2 3 0 6" fill="none" stroke="#fff" strokeWidth="1.5" />
                <path d="M14 4q4 5 0 10M16 2q6 7 0 14" fill="none" stroke="#666" strokeWidth="1.5" />
              </svg>
            </TrayButton>
            <TrayButton aria-label="Battery">
              <svg width="20" height="17">
                <path d="M6 4h9q3 0 3 3v5q0 3-3 3H4q-3 0-3-3V9" fill="none" stroke="#fff" strokeWidth="1.5" />
                <path d="M7 6h7v7H3v-3zM18 7h2v5h-2z" fill="#fff" />
                <path d="M4 0L1 6h2v4l4-6H4z" fill="#fff" />
              </svg>
            </TrayButton>
          </TrayIcons>
          <Clock>10:16 PM<br />Apr 12, 2023</Clock>
        </Tray>
      </TaskBar>
    </Screen>
  );
}
